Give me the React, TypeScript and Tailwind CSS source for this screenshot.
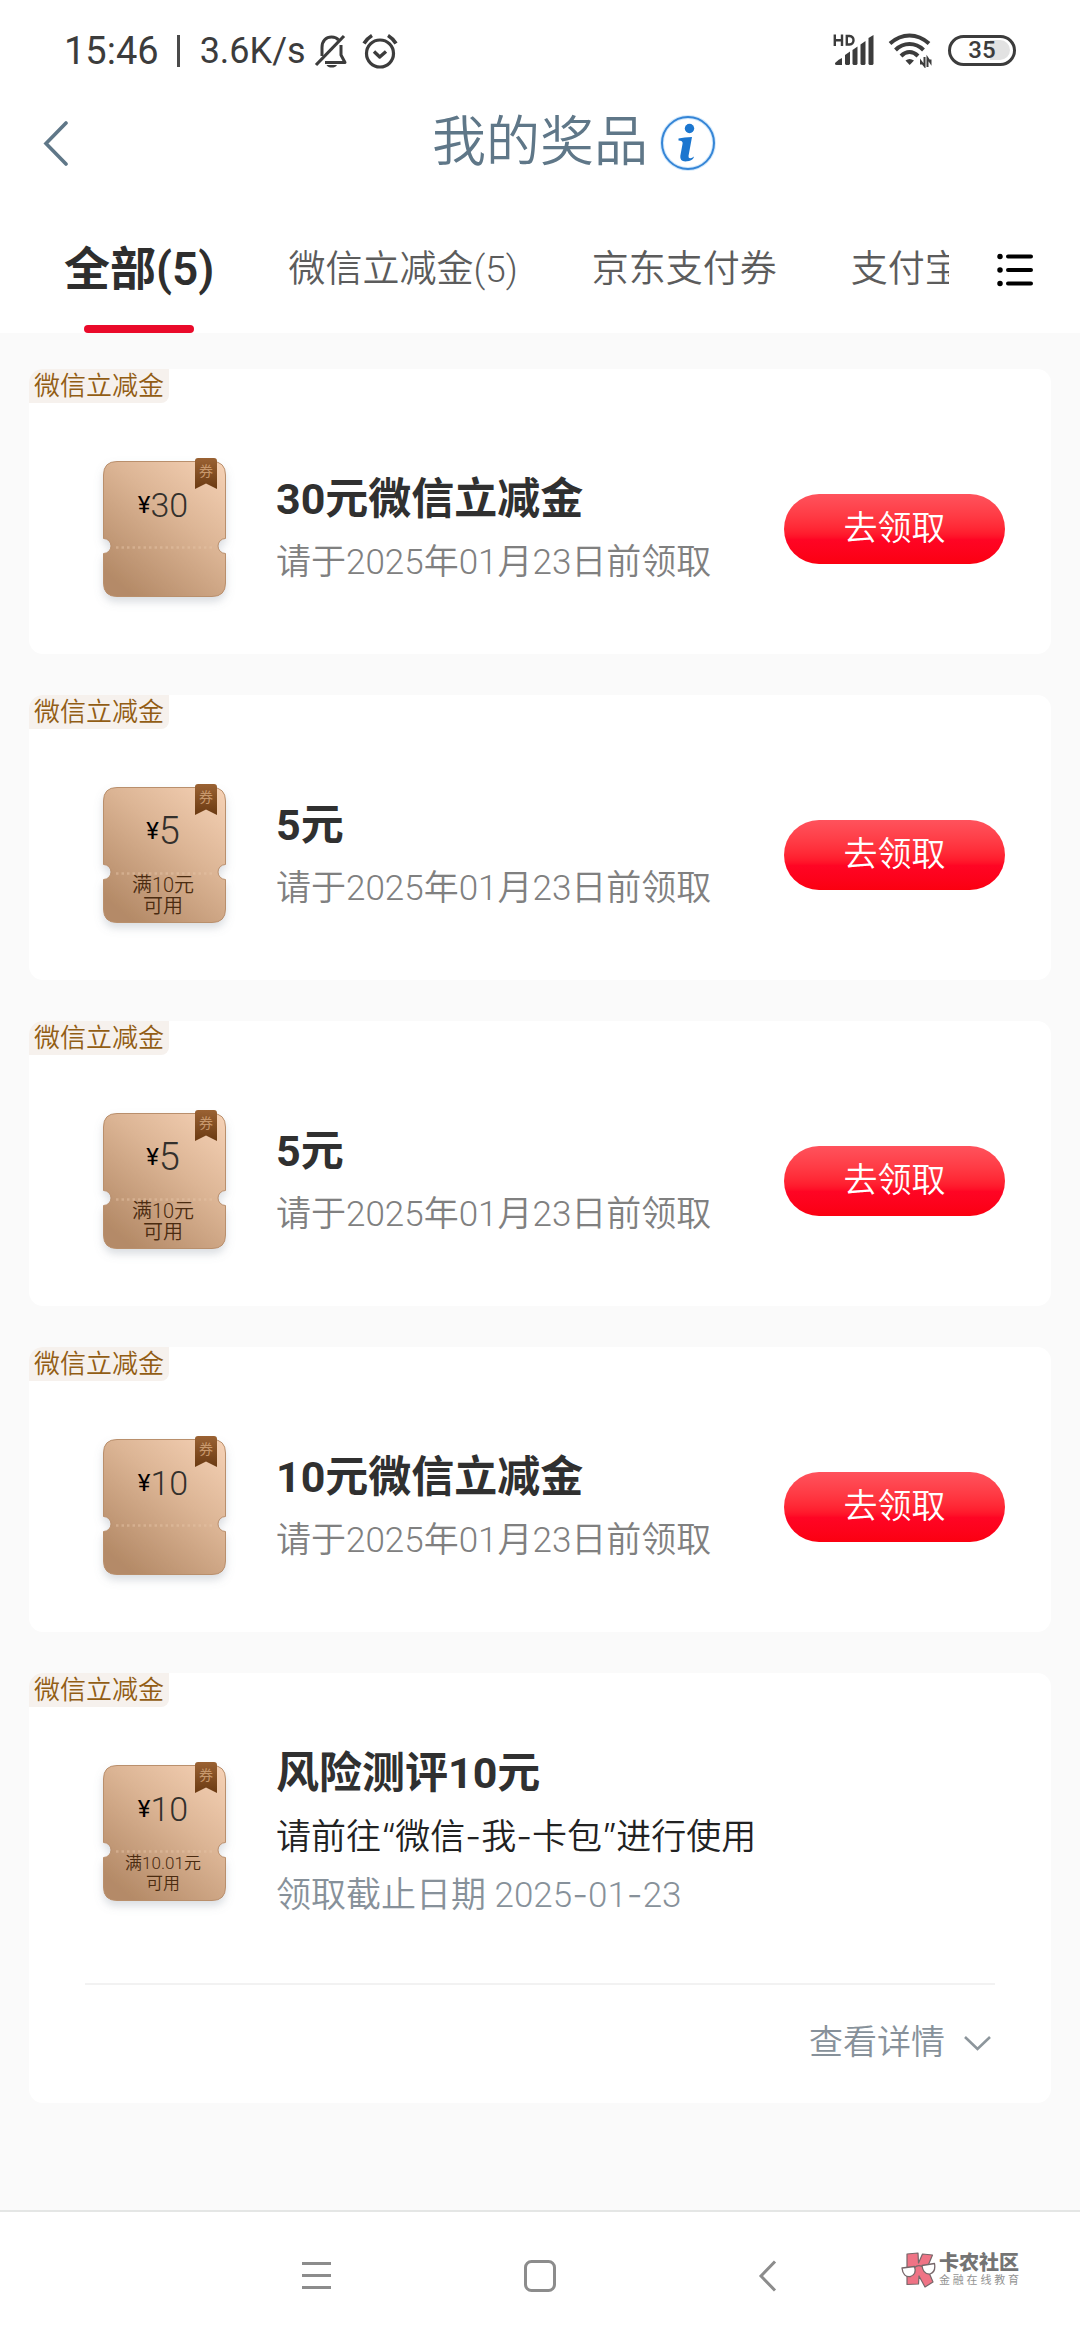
import type { ReactNode } from "react";

type Prize = {
  id: number;
  tag: string;
  amount: string;
  condition?: string;
  title: string;
  lines: string[];
  claimable: boolean;
};

const TABS = ["全部(5)", "微信立减金(5)", "京东支付券", "支付宝"];

const PRIZES: Prize[] = [
  { id: 1, tag: "微信立减金", amount: "30", title: "30元微信立减金", lines: ["请于2025年01月23日前领取"], claimable: true },
  { id: 2, tag: "微信立减金", amount: "5", condition: "满10元", title: "5元", lines: ["请于2025年01月23日前领取"], claimable: true },
  { id: 3, tag: "微信立减金", amount: "5", condition: "满10元", title: "5元", lines: ["请于2025年01月23日前领取"], claimable: true },
  { id: 4, tag: "微信立减金", amount: "10", title: "10元微信立减金", lines: ["请于2025年01月23日前领取"], claimable: true },
  {
    id: 5,
    tag: "微信立减金",
    amount: "10",
    condition: "满10.01元",
    title: "风险测评10元",
    lines: ["请前往“微信-我-卡包”进行使用", "领取截止日期 2025-01-23"],
    claimable: false,
  },
];

function WideMarks({ text }: { text: string }) {
  const parts: ReactNode[] = text.split(/([-“”])/).map((part, i) =>
    i % 2 === 0 ? (
      part
    ) : (
      <span key={i} className="font-['Inter',sans-serif]">
        {part}
      </span>
    ),
  );
  return <>{parts}</>;
}

function StatusBar() {
  return (
    <div className="flex h-[100px] items-center justify-between pl-16 pr-16 text-[#3c3c3c]">
      <div className="flex items-center pt-0.5 text-[36px] leading-[40px]">
        <span className="text-[38px]">15:46</span>
        <span className="ml-[18px] h-8 w-[3px] bg-[#4a4a4a]" />
        <span className="ml-5">3.6K/s</span>
        <svg className="ml-2 h-9 w-9" viewBox="0 0 36 36" fill="none" stroke="currentColor" strokeWidth="3">
          <path d="M8 23V14.500C8 8 12 4 17.500 4C20.500 4 23 5 24.500 7" />
          <path d="M2 32L30 3" strokeWidth="3.200" />
          <path d="M27 12V22L31 29.500H11" strokeLinejoin="round" />
          <path d="M12.500 32H23C22 34 20 34.500 17.700 34.500S13.500 34 12.500 32Z" fill="currentColor" stroke="none" />
        </svg>
        <svg className="ml-3 h-9 w-9" viewBox="0 0 36 36" fill="none" stroke="currentColor" strokeWidth="3.200">
          <circle cx="18" cy="20.500" r="13.500" />
          <path d="M12 18.500L17.700 24L24 18.500" strokeWidth="3.400" strokeLinejoin="round" />
          <path d="M2 10.500Q5 5.500 10 2.500M34 10.500Q31 5.500 26 2.500" strokeWidth="3.600" />
        </svg>
      </div>
      <div className="flex items-center">
        <svg className="h-8 w-11" viewBox="0 0 44 32" fill="currentColor">
          <path d="M2.800 .5V12M10 .5V12M2.800 6.200H10M14.800 2V10.500H17.500Q21.500 10.200 21.500 6.300T17.500 2Z" fill="none" stroke="currentColor" strokeWidth="2.400" />
          <path d="M3 29Q7 25 10 24V31H4.500Q2.500 31 3 29Z" />
          <path d="M13 21L18 17.500V30L17 31H14L13 30Z" />
          <path d="M20.500 16L25.500 12.500V30L24.500 31H21.500L20.500 30Z" />
          <path d="M28.500 10.500L33.500 7V30L32.500 31H29.500L28.500 30Z" />
          <path d="M36.500 4L41.500 1V30L40.500 31H37.500L36.500 30Z" />
        </svg>
        <svg className="ml-3 h-9 w-11" viewBox="0 0 44 36" fill="none" stroke="currentColor" strokeWidth="4">
          <path d="M2 11.500Q11 3.500 21.500 3.500T41 11.500" />
          <path d="M7.500 18Q13.500 12 21.500 12T35.500 18" />
          <path d="M13 24Q17 20 21.500 20T30 24" />
          <path d="M17.500 28.500Q21.500 25.500 26 28.500L21.700 33Z" fill="currentColor" stroke="none" />
          <path d="M33 32.500V29.500L36.500 34V25M39.500 35V26L42.500 30.500V27.500" strokeWidth="2" />
        </svg>
        <div className="relative ml-4 flex h-[31px] w-[68px] items-center justify-center rounded-full border-[3px] border-[#3c3c3c]">
          <span className="absolute right-[3px] h-[20px] w-5 rounded-r-full bg-[#e2e2e2]" />
          <span className="relative text-[24px] font-medium leading-[24px]">35</span>
        </div>
      </div>
    </div>
  );
}

function Header() {
  return (
    <header className="relative flex h-[86px] items-center justify-center text-[#5f7788]">
      <button aria-label="返回" className="absolute left-10 flex h-16 w-12 items-center">
        <svg className="h-[46px] w-[30px]" viewBox="0 0 30 46" fill="none" stroke="currentColor" strokeWidth="3.600" strokeLinecap="round">
          <path d="M26 3L6 23.500L26 44" />
        </svg>
      </button>
      <h1 className="ml-[68px] text-[54px] font-[350] leading-[64px]">我的奖品</h1>
      <button aria-label="说明" className="ml-3">
        <svg className="h-14 w-14" viewBox="0 0 56 56" fill="none">
          <circle cx="28" cy="28" r="26" stroke="#d3e9fc" strokeWidth="4" />
          <circle cx="28" cy="28" r="26" stroke="#3585d6" strokeWidth="2" />
          <circle cx="29.500" cy="13.500" r="4.700" fill="#1b76cf" />
          <path d="M18.500 23.500Q24 22 32 22L28.500 41Q28.300 43.500 30.500 43.200Q32 43 34 41.500Q33.500 44.500 29 46Q19.500 48 20.300 41L22.600 28.500Q23 25.500 18.500 25.500Z" fill="#1b76cf" />
        </svg>
      </button>
    </header>
  );
}

function Tabs() {
  return (
    <nav className="flex h-[147px] items-stretch">
      <div role="tablist" className="flex flex-1 gap-[74px] overflow-hidden pl-16">
        {TABS.map((tab, i) => (
          <button
            key={tab}
            role="tab"
            aria-selected={i === 0}
            className={
              i === 0
                ? "relative flex shrink-0 items-center justify-center whitespace-nowrap pt-5 text-[46px] font-semibold text-[#2e2e2e]"
                : "flex shrink-0 items-center whitespace-nowrap pt-5 text-[37px] font-[350] text-[#5c5c5c]"
            }
          >
            {tab}
            {i === 0 && <span className="absolute bottom-0 h-2 w-[110px] rounded-full bg-[#ea0a2a]" />}
          </button>
        ))}
      </div>
      <button aria-label="全部分类" className="flex w-[131px] items-center justify-center pt-5">
        <svg className="h-9 w-9" viewBox="0 0 36 36" fill="none" stroke="#000" strokeWidth="4" strokeLinecap="round">
          <path d="M11 4.500H34M11 18H34M11 31.500H34" />
          <path d="M3 4.500H3.010M3 18H3.010M3 31.500H3.010" strokeWidth="5.500" />
        </svg>
      </button>
    </nav>
  );
}

function Ticket({ amount, condition }: { amount: string; condition?: string }) {
  const long = (condition ?? "").length > 5;
  return (
    <div className="relative h-[136px] w-[123px] shrink-0">
      <svg className="absolute inset-0 h-full w-full overflow-visible" viewBox="0 0 123 136">
        <defs>
          <linearGradient id="ticket" x1="1" y1="0" x2="0.250" y2="1">
            <stop offset="0" stopColor="#f6d2b6" />
            <stop offset="0.450" stopColor="#dcb595" />
            <stop offset="1" stopColor="#b48a67" />
          </linearGradient>
          <linearGradient id="ribbon" x1="0" y1="0" x2="0" y2="1">
            <stop offset="0" stopColor="#9a6233" />
            <stop offset="1" stopColor="#6b3a12" />
          </linearGradient>
          <filter id="shade" x="-20%" y="-20%" width="140%" height="150%">
            <feDropShadow dx="0" dy="5" stdDeviation="4" floodColor="#7b8794" floodOpacity="0.280" />
          </filter>
        </defs>
        <path
          d="M14 .5H109Q122.500 .5 122.500 14V77.500A7.500 7.500 0 0 0 122.500 92.500V122Q122.500 135.500 109 135.500H14Q.5 135.500 .5 122V92.500A7.500 7.500 0 0 0 .5 77.500V14Q.5 .5 14 .5Z"
          fill="url(#ticket)"
          stroke="#b98f6c"
          strokeWidth="1"
          filter="url(#shade)"
        />
        <path d="M13 86.500H111" stroke="#e6c3a5" strokeOpacity="0.500" strokeWidth="2.500" strokeDasharray="2.500 3" />
        <path d="M92 0Q92 -3 95 -3H111Q114 -3 114 0V28L103 22.500L92 28Z" fill="url(#ribbon)" />
      </svg>
      <span className="absolute right-[9px] top-0 w-[22px] text-center text-[14px] leading-[20px] text-[#c8986c]">券</span>
      <div className="relative flex h-full flex-col items-center pr-[3px] pt-6 text-center">
        <p className="flex h-10 items-center justify-center leading-10 text-[#33302c]">
          <span className="text-[24px] text-black">¥</span>
          <span className={amount.length > 1 ? "text-[34px] font-[350]" : "text-[38px] font-[350]"}>{amount}</span>
        </p>
        {condition && (
          <p
            className={
              long
                ? "mt-6 text-[17px] font-[350] leading-[20px] text-[#4a2b10]"
                : "mt-6 text-[20px] font-[350] leading-[21px] text-[#4a2b10]"
            }
          >
            {condition}
            <br />
            可用
          </p>
        )}
      </div>
    </div>
  );
}

function PrizeCard({ prize }: { prize: Prize }) {
  return (
    <article className="overflow-hidden rounded-[14px] bg-white">
      <div className="flex">
        <span className="rounded-br-lg bg-[#f6f1ed] px-[5px] text-[26px] font-[350] leading-[34px] text-[#925d14]">{prize.tag}</span>
      </div>
      <div className="flex h-[251px] items-center pl-[74px] pr-[46px]">
        <Ticket amount={prize.amount} condition={prize.condition} />
        <div className={prize.claimable ? "ml-[50px] flex-1 pt-1" : "ml-[50px] flex-1 pb-1"}>
          <h2 className="text-[43px] font-bold leading-[64px] text-[#303030]">{prize.title}</h2>
          {prize.lines.map((line, i) => (
            <p
              key={line}
              className={
                prize.claimable
                  ? "text-[35px] font-[350] leading-[64px] text-[#808080]"
                  : i === 0
                    ? "text-[35px] font-[350] leading-[62px] text-[#222222]"
                    : "text-[35px] font-[350] leading-[50px] text-[#87919a]"
              }
            >
              <WideMarks text={line} />
            </p>
          ))}
        </div>
        {prize.claimable && (
          <button className="h-[70px] w-[221px] rounded-full bg-linear-to-b from-[#ff525c] via-[#ff0524] via-65% to-[#fb0010] text-[34px] font-[350] text-white">
            去领取
          </button>
        )}
      </div>
      {!prize.claimable && (
        <div className="mx-14 mt-[25px] flex h-[120px] items-center justify-end border-t-2 border-[#f2f2f2] pb-1 pr-0.5">
          <button className="flex items-center text-[34px] font-[350] text-[#87919a]">
            查看详情
            <svg className="ml-4 h-7 w-8" viewBox="0 0 32 28" fill="none" stroke="#8d969c" strokeWidth="2.600">
              <path d="M4 9L16.500 21L29 9" />
            </svg>
          </button>
        </div>
      )}
    </article>
  );
}

function Watermark() {
  return (
    <div className="absolute right-[61px] top-10 flex items-center">
      <svg className="h-9 w-[35px]" viewBox="0 0 35 36" strokeLinejoin="round">
        <path
          d="M6 2L17 1L17.500 11L21.500 2L31.500 3L26 16L32 30L24 35L18 24L17.500 32L6 32.500Z"
          fill="#ef7385"
          stroke="#77676a"
          strokeWidth="1.200"
        />
        <g fill="#fff" stroke="#77676a" strokeWidth="1.300">
          <path d="M1 16L13.500 14.500Q16 22 9.500 24.500Q2 25.500 1 16Z" />
          <path d="M21 13.500L33.500 11.500Q35 20 29 22Q22 22.500 21 13.500Z" />
          <path d="M13.500 15.500Q17 12.500 21 14.500" fill="none" />
        </g>
      </svg>
      <div className="ml-[3px]">
        <p className="text-[20px] font-black leading-[22px] text-[#747474]">卡农社区</p>
        <p className="flex justify-between text-[11px] leading-[14px] text-[#929292]">
          {Array.from("金融在线教育").map((c) => (
            <span key={c}>{c}</span>
          ))}
        </p>
      </div>
    </div>
  );
}

function SystemNav() {
  return (
    <footer className="relative mt-auto flex h-[130px] items-center justify-center gap-48 border-t-2 border-[#e4e6e5] bg-white text-[#8c8c8c]">
      <button aria-label="最近任务">
        <svg className="h-8 w-8" viewBox="0 0 32 32" stroke="currentColor" strokeWidth="3">
          <path d="M2 3.500H31M2 15.500H31M2 27.500H31" />
        </svg>
      </button>
      <button aria-label="主页">
        <svg className="h-8 w-8" viewBox="0 0 32 32" fill="none" stroke="currentColor" strokeWidth="3">
          <rect x="1.500" y="1.500" width="29" height="29" rx="6" />
        </svg>
      </button>
      <button aria-label="返回上一页">
        <svg className="h-8 w-8" viewBox="0 0 32 32" fill="none" stroke="currentColor" strokeWidth="3">
          <path d="M27 1.500L13 16L27 30.500" />
        </svg>
      </button>
      <Watermark />
    </footer>
  );
}

export default function App() {
  return (
    <div className="flex min-h-screen flex-col bg-[#fafafa] font-['Roboto','Noto_Sans_CJK_SC',sans-serif]">
      <div className="bg-white">
        <StatusBar />
        <Header />
        <Tabs />
      </div>
      <main className="flex flex-col gap-[41px] px-[29px] pb-10 pt-9">
        {PRIZES.map((prize) => (
          <PrizeCard key={prize.id} prize={prize} />
        ))}
      </main>
      <SystemNav />
    </div>
  );
}
